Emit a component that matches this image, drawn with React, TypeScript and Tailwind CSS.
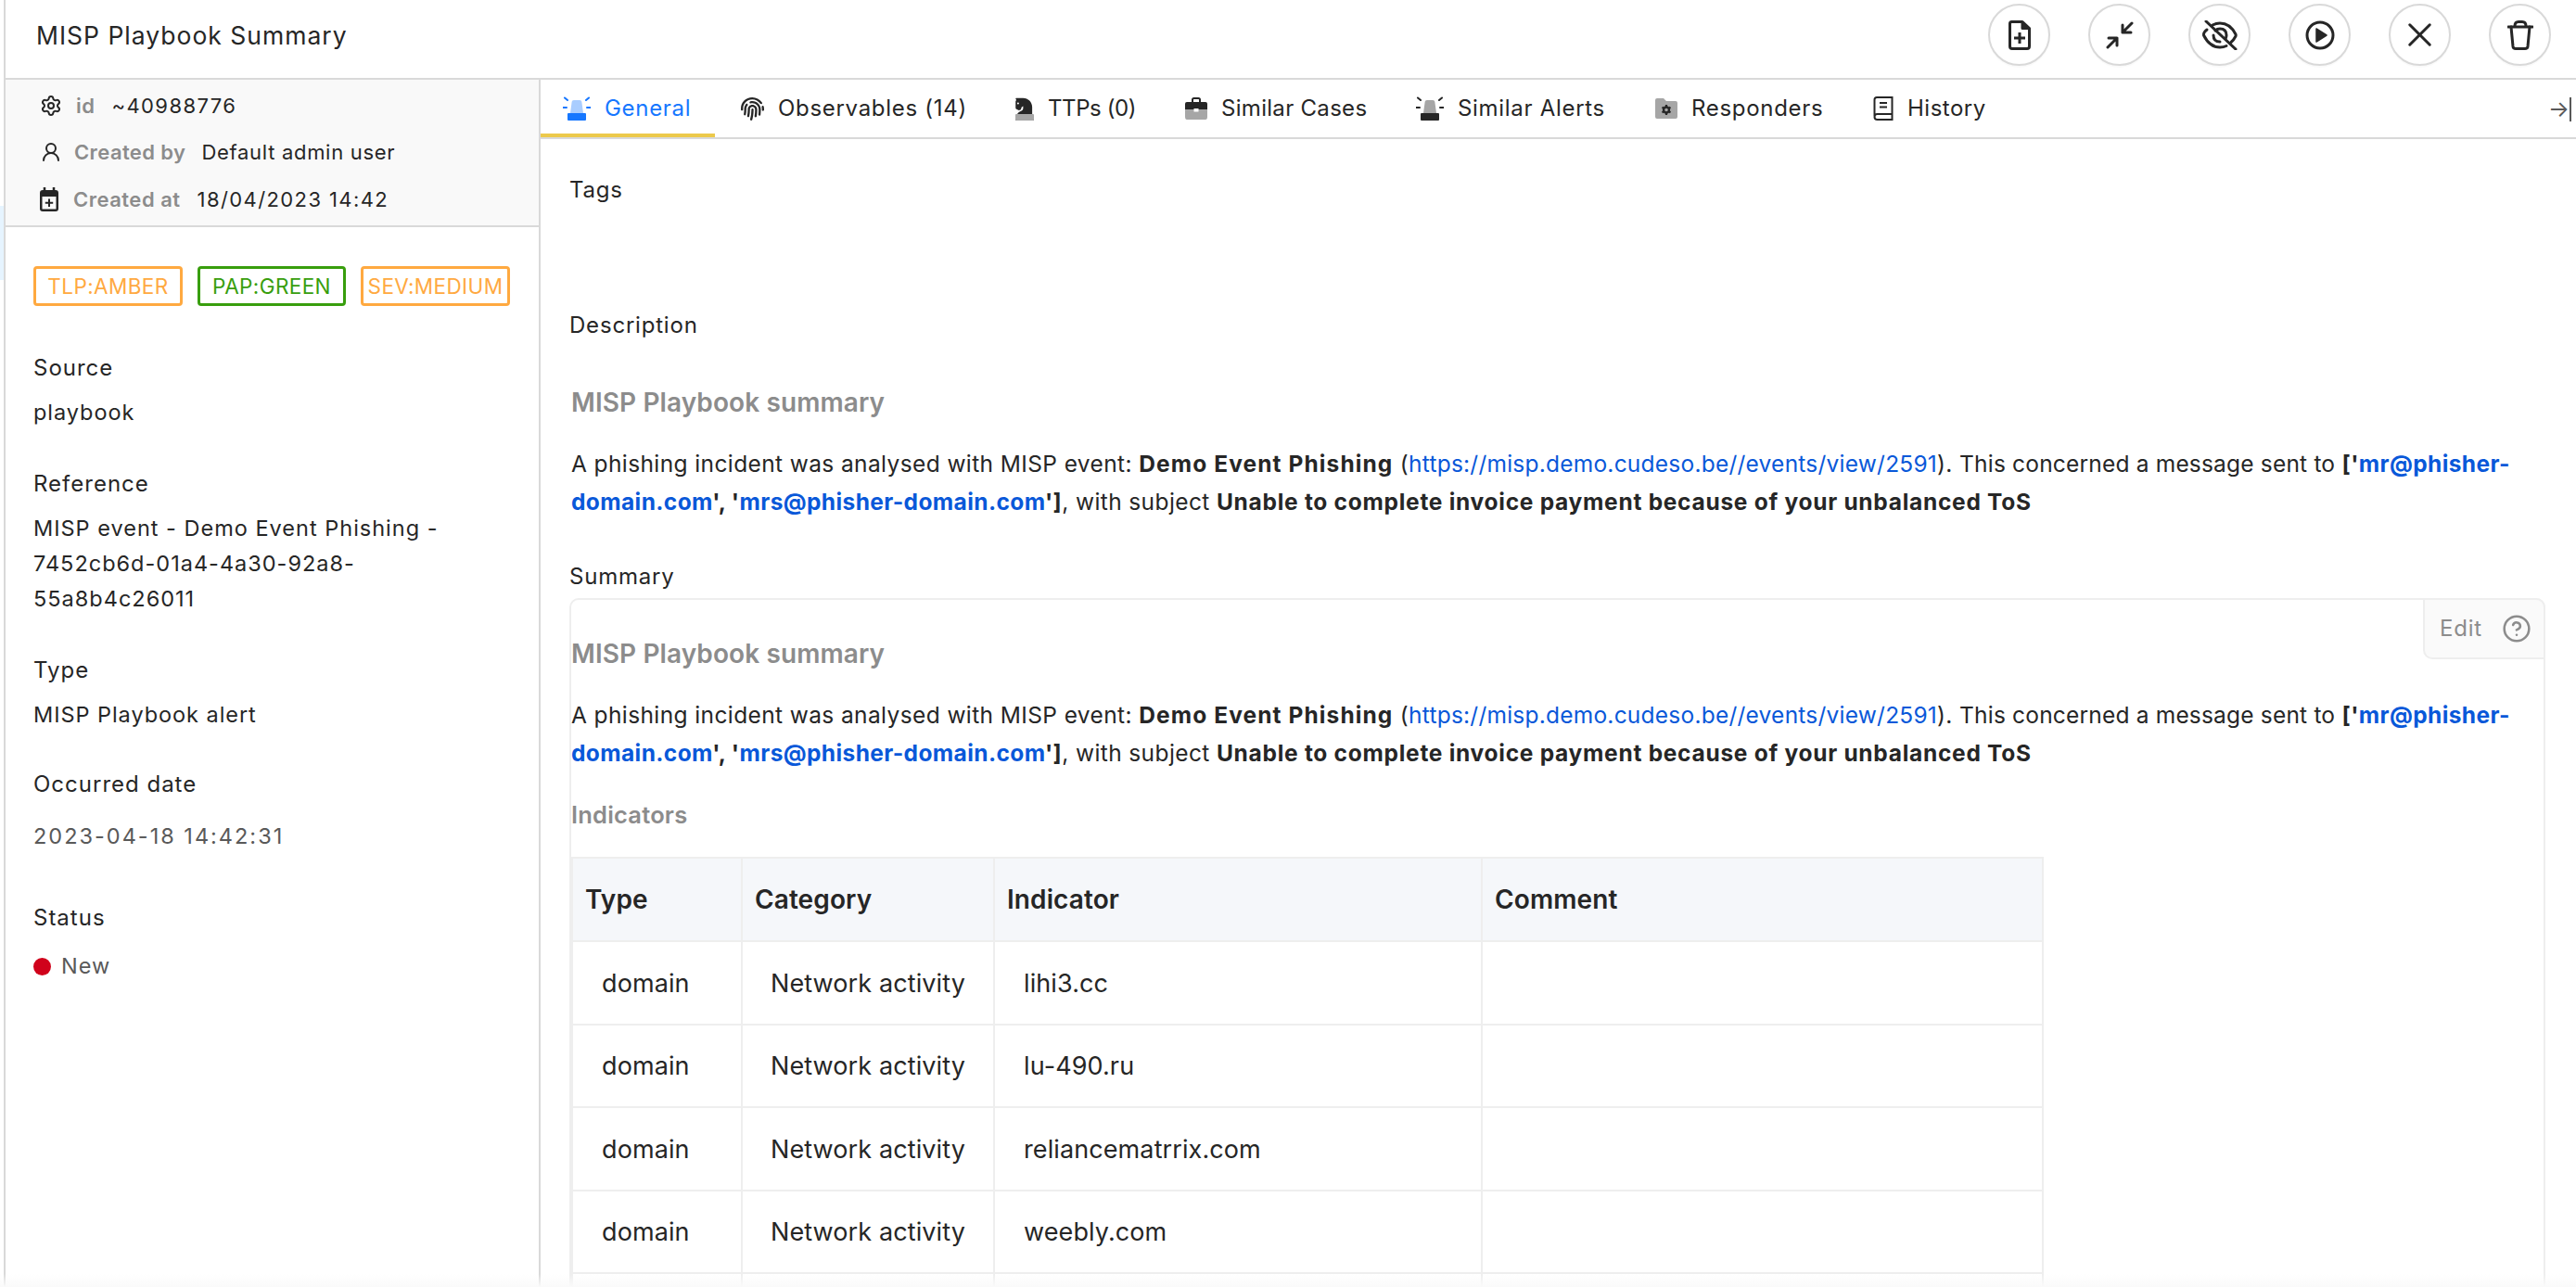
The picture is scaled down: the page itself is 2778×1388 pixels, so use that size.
import { CircleHelp, Settings, UserRound, X } from 'lucide-react';
import { FaChessKnight, FaFingerprint } from 'react-icons/fa';

const tabs = [
  { label: 'Observables (14)', icon: 'print', cls: 'w-[324px] pl-[28px]', text: 'tracking-[0.7px]' },
  { label: 'TTPs (0)', icon: 'knight', cls: 'w-[183px]', text: 'tracking-[-0.4px]' },
  { label: 'Similar Cases', icon: 'case', cls: 'w-[249px]', text: 'tracking-[0.3px]' },
  { label: 'Similar Alerts', icon: 'siren', cls: 'w-[258px]', text: 'tracking-[0.7px]' },
  { label: 'Responders', icon: 'folder', cls: 'w-[235px]', text: 'tracking-[0.7px]' },
  { label: 'History', icon: 'book', cls: 'w-[180px]', text: 'tracking-[0.5px]' },
];

const rows = ['lihi3.cc', 'lu-490.ru', 'reliancematrrix.com', 'weebly.com', ''];

function Siren({ dark }: { dark?: boolean }) {
  const base = dark ? '#262626' : '#1677ff';
  const dome = dark ? '#a6a6a6' : '#a9cdff';
  const ray = dark ? '#262626' : '#1677ff';
  return (
    <svg width="30" height="26" viewBox="0 0 30 26" fill="none">
      <path d="M9.5 7 Q9.5 4 12 4 H18 Q20.5 4 20.5 7 L22 18 H8 Z" fill={dome} />
      <rect x="5" y="18" width="20" height="8" rx="1" fill={base} />
      <path d="M2 1.5 L5 4 M28 1.5 L25 4 M0.5 12 H4 M26 12 H29.5" stroke={ray} strokeWidth="2" strokeLinecap="round" />
    </svg>
  );
}

function TabIcon({ name }: { name: string }) {
  if (name === 'print') return <FaFingerprint size={25} className="text-[#262626]" />;
  if (name === 'knight')
    return (
      <span className="relative flex h-[26px] w-[20px] flex-col items-center overflow-hidden">
        <FaChessKnight size={26} className="text-[#262626]" />
        <span className="absolute bottom-0 left-0 h-[7px] w-[20px] rounded-[1px] bg-[#a6a6a6]" />
      </span>
    );
  if (name === 'case')
    return (
      <svg width="24" height="24" viewBox="0 0 24 24" fill="none">
        <path d="M8 5 V2.5 Q8 1 9.5 1 H14.5 Q16 1 16 2.5 V5" stroke="#262626" strokeWidth="2" />
        <path d="M0 7 Q0 5 2 5 H22 Q24 5 24 7 V13 H0 Z" fill="#262626" />
        <path d="M0 13 H24 V21 Q24 24 22 24 H2 Q0 24 0 21 Z" fill="#a6a6a6" />
        <rect x="9.5" y="12" width="5" height="3.5" fill="#fff" />
      </svg>
    );
  if (name === 'siren') return <Siren dark />;
  if (name === 'folder')
    return (
      <svg width="24" height="24" viewBox="0 0 24 24">
        <path d="M0 3 Q0 1 2 1 H9 L12 4 H22 Q24 4 24 6 V21 Q24 23 22 23 H2 Q0 23 0 21 Z" fill="#a6a6a6" />
        <circle cx="12" cy="13.5" r="3" fill="none" stroke="#262626" strokeWidth="2.4" />
        <path d="M12 8 V10 M12 17 V19 M7.500 10.700 L9 11.700 M15 15.300 L16.500 16.300 M7.500 16.300 L9 15.300 M15 11.700 L16.500 10.700" stroke="#262626" strokeWidth="2.2" />
      </svg>
    );
  return (
    <svg width="22" height="26" viewBox="0 0 22 26" fill="none" stroke="#262626" strokeWidth="2">
      <path d="M1.5 21 V3.5 Q1.5 1 4 1 H20.5 V19 H4.5 Q1.5 19 1.5 22 Q1.5 25 4.5 25 H20.5 V19" />
      <path d="M7 7 H15 M7 11.5 H15" />
    </svg>
  );
}

function RoundButton({ children }: { children: React.ReactNode }) {
  return (
    <div className="flex size-[67px] shrink-0 items-center justify-center rounded-full border-2 border-[#d9d9d9] bg-white text-[#262626] shadow-[0_2px_0_rgba(0,0,0,0.02)]">
      {children}
    </div>
  );
}

function Field({ label, className, children }: { label: string; className: string; children: React.ReactNode }) {
  return (
    <div className={className}>
      <div className="text-[24px] leading-[30px] tracking-[1px] text-[#262626]">{label}</div>
      {children}
    </div>
  );
}

function Report() {
  return (
    <>
      <h2 className="text-[28px] font-semibold leading-[36px] tracking-[0.1px] text-[#8c8c8c]">MISP Playbook summary</h2>
      <p className="mt-[28px] whitespace-nowrap text-[24.5px] leading-[41px] tracking-[0.39px] text-[#262626]">
        A phishing incident was analysed with MISP event: <b className="tracking-[1.1px]">Demo Event Phishing</b> (
        <span className="tracking-[0.23px] text-[#0958d9]">https://misp.demo.cudeso.be//events/view/2591</span>).{' '}
        <span className="tracking-[0.19px]">This concerned a message sent to</span>{' '}
        <b>
          ['<span className="text-[#0958d9]">mr@phisher-</span>
          <br />
          <span className="text-[#0958d9]">domain.com</span>', '<span className="text-[#0958d9]">mrs@phisher-domain.com</span>']
        </b>
        , with subject <b className="tracking-[0.72px]">Unable to complete invoice payment because of your unbalanced ToS</b>
      </p>
    </>
  );
}

export default function App() {
  return (
    <div className="relative flex h-[1388px] w-[2778px] overflow-hidden bg-white text-[#262626] [font-family:Inter,sans-serif]">
      {/* strip of the nav behind the drawer */}
      <div className="w-[4px] shrink-0 bg-white">
        <div className="mt-[222px] h-[80px] bg-[#e6f4ff]" />
      </div>

      <div className="flex min-w-0 flex-1 flex-col border-l-2 border-[#d9d9d9]">
        {/* Title bar */}
        <header className="flex h-[86px] shrink-0 border-b-2 border-[#d9d9d9] pl-[33px]">
          <div className="mt-[19px] text-[26.5px] leading-[38px] tracking-[1px] text-[#262626]">MISP Playbook Summary</div>
          <div className="ml-auto mr-[27px] mt-[4px] flex gap-[41px]">
            <RoundButton>
              <svg width="24" height="32" viewBox="0 0 24 32" fill="none" stroke="currentColor" strokeWidth="3" strokeLinejoin="round">
                <path d="M3.5 1.5 H15 L22.5 8.5 V28 Q22.5 30.5 20 30.5 H4 Q1.5 30.5 1.5 28 V3.5 Q1.5 1.5 3.5 1.5 Z" />
                <path d="M15 1.5 V8.5 H22.5" fill="currentColor" />
                <path d="M12 13 V25 M6 19 H18" />
              </svg>
            </RoundButton>
            <RoundButton>
              <svg width="30" height="30" viewBox="0 0 30 30" fill="none" stroke="currentColor" strokeWidth="3" strokeLinecap="round" strokeLinejoin="round">
                <path d="M28 2 L18 12 M18 4 V12 H27" />
                <path d="M2 28 L12 18 M12 26 V18 H3" />
              </svg>
            </RoundButton>
            <RoundButton>
              <svg width="40" height="32" viewBox="0 0 40 32" fill="none" stroke="currentColor" strokeWidth="3" strokeLinecap="round" strokeLinejoin="round">
                <path d="M6 10 Q2 13 2.500 16 Q9 29 20 29 Q24 29 27 27.500" />
                <path d="M12 5 Q16 3 20 3 Q31 3 37 15 Q37.500 16 37 17 Q35 21 32 23.500" />
                <path d="M15 11 Q17 9 20 9 Q27 9 27 16 Q27 18 26 20 M13 16 Q13 23 20 23" />
                <path d="M5 1 L37 31" />
              </svg>
            </RoundButton>
            <RoundButton>
              <svg width="32" height="32" viewBox="0 0 32 32">
                <circle cx="16" cy="16" r="14" fill="none" stroke="currentColor" strokeWidth="3" />
                <path d="M12 9 L23 16 L12 23 Z" fill="currentColor" stroke="currentColor" strokeLinejoin="round" strokeWidth="1.500" />
              </svg>
            </RoundButton>
            <RoundButton>
              <X size={43} strokeWidth={1.700} />
            </RoundButton>
            <RoundButton>
              <svg width="28" height="32" viewBox="0 0 28 32" fill="none" stroke="currentColor" strokeWidth="3" strokeLinecap="round" strokeLinejoin="round">
                <path d="M1 7 H27" />
                <path d="M8 6 Q8 1.500 12 1.500 H16 Q20 1.500 20 6" />
                <path d="M4 7 L6 28 Q6.300 30.500 9 30.500 H19 Q21.700 30.500 22 28 L24 7" />
              </svg>
            </RoundButton>
          </div>
        </header>

        <div className="flex min-h-0 flex-1">
          {/* Sidebar */}
          <aside className="flex w-[577px] shrink-0 flex-col border-r-2 border-[#d9d9d9]">
            <div className="h-[159px] shrink-0 border-b-2 border-[#d9d9d9] bg-[#f9f9f9] pl-[38px] pt-[15px] text-[22px]">
              <div className="flex h-[26px] items-center">
                <Settings size={24} strokeWidth={2} className="-ml-[1px] text-[#262626]" />
                <span className="ml-[15px] font-semibold tracking-[0.5px] text-[#8c8c8c]">id</span>
                <span className="ml-[18px] tracking-[1.4px]">~40988776</span>
              </div>
              <div className="mt-[24px] flex h-[26px] items-center">
                <UserRound size={24} strokeWidth={2} className="-ml-[1px]" />
                <span className="ml-[13px] font-semibold tracking-[0.4px] text-[#8c8c8c]">Created by</span>
                <span className="ml-[17px] tracking-[0.7px]">Default admin user</span>
              </div>
              <div className="mt-[25px] flex h-[26px] items-center">
                <svg width="20" height="26" viewBox="0 0 20 26" className="-ml-[1px] mr-[1px]">
                  <path d="M3 3 H17 Q20 3 20 6 V23 Q20 26 17 26 H3 Q0 26 0 23 V6 Q0 3 3 3 Z M2.500 10 V23.500 H17.500 V10 Z" fill="#262626" fillRule="evenodd" />
                  <path d="M5 0 V4 M15 0 V4" stroke="#262626" strokeWidth="2.500" />
                  <path d="M10 12.500 V21 M5.800 16.800 H14.200" stroke="#262626" strokeWidth="2" />
                </svg>
                <span className="ml-[15px] font-semibold tracking-[0.5px] text-[#8c8c8c]">Created at</span>
                <span className="ml-[18px] tracking-[1.4px]">18/04/2023 14:42</span>
              </div>
            </div>

            <div className="flex-1 pl-[30px]">
              <div className="mt-[42px] flex gap-[16px] text-[22.5px] tracking-[0.4px]">
                <span className="flex h-[43px] w-[161px] items-center justify-center rounded-[4px] border-[3px] border-[#ffa940] text-[#ffa940]">TLP:AMBER</span>
                <span className="flex h-[43px] w-[160px] items-center justify-center rounded-[4px] border-[3px] border-[#389e0d] text-[#389e0d]">PAP:GREEN</span>
                <span className="flex h-[43px] w-[161px] items-center justify-center rounded-[4px] border-[3px] border-[#ffa940] text-[#ffa940]">SEV:MEDIUM</span>
              </div>
              <Field label="Source" className="mt-[52px]">
                <div className="mt-[18px] text-[23.5px] leading-[30px] tracking-[0.95px]">playbook</div>
              </Field>
              <Field label="Reference" className="mt-[47px]">
                <div className="mt-[14px] whitespace-nowrap text-[23.5px] leading-[38px] tracking-[1px]">
                  MISP event - Demo Event Phishing -<br />
                  7452cb6d-01a4-4a30-92a8-
                  <br />
                  55a8b4c26011
                </div>
              </Field>
              <Field label="Type" className="mt-[43px]">
                <div className="mt-[18px] text-[23.5px] leading-[30px] tracking-[0.95px]">MISP Playbook alert</div>
              </Field>
              <Field label="Occurred date" className="mt-[45px]">
                <div className="mt-[26px] text-[23.5px] leading-[30px] tracking-[2px] text-[#595959]">2023-04-18 14:42:31</div>
              </Field>
              <Field label="Status" className="mt-[58px]">
                <div className="mt-[22px] flex items-center">
                  <span className="size-[19px] rounded-full bg-[#d0021b]" />
                  <span className="ml-[11px] text-[23.5px] leading-[30px] tracking-[0.95px] text-[#595959]">New</span>
                </div>
              </Field>
            </div>
          </aside>

          {/* Main panel */}
          <main className="flex min-w-0 flex-1 flex-col">
            <div className="relative flex h-[64px] shrink-0 border-b-2 border-[#d9d9d9]">
              <div className="flex h-[62px] w-[188px] shrink-0 items-center border-b-[4px] border-[#ecc94b] pl-[24px] pt-[4px] text-[#1677ff]">
                <Siren />
                <span className="ml-[15px] text-[24px] tracking-[0.7px]">General</span>
              </div>
              {tabs.map((t) => (
                <div key={t.label} className={`flex h-[62px] shrink-0 items-center ${t.cls}`}>
                  <TabIcon name={t.icon} />
                  <span className={`ml-[15px] whitespace-nowrap text-[24px] ${t.text}`}>{t.label}</span>
                </div>
              ))}
              <div className="absolute right-[5px] top-[17px] flex items-center text-[#595959]">
                <span className="text-[24px] leading-[30px]">→</span>
                <span className="h-[26px] w-[2px] bg-[#595959]" />
              </div>
            </div>

            <div className="min-h-0 flex-1 overflow-hidden pl-[31px] pr-[33px]">
              <div className="mt-[40px] text-[24px] leading-[30px] tracking-[0.8px]">Tags</div>
              <div className="mt-[116px] text-[24px] leading-[30px] tracking-[0.8px]">Description</div>
              <div className="ml-[2px] mt-[50px]">
                <Report />
              </div>
              <div className="mt-[45px] text-[24px] leading-[30px] tracking-[0.8px]">Summary</div>

              <div className="relative mt-[8px] rounded-[10px] border-2 border-[#eeeeee]">
                <div className="absolute right-[-2px] top-[-2px] flex h-[66px] w-[132px] items-center rounded-bl-[10px] rounded-tr-[10px] border-2 border-[#eeeeee] bg-[#fafafa] pl-[16px] text-[#8c8c8c]">
                  <span className="text-[24px] tracking-[0.8px]">Edit</span>
                  <CircleHelp size={32} strokeWidth={1.900} className="ml-[21px]" />
                </div>
                <div className="pt-[40px]">
                  <Report />
                  <h3 className="mt-[28px] text-[25.5px] font-semibold leading-[36px] tracking-[0.2px] text-[#8c8c8c]">Indicators</h3>
                  <table className="mt-[27px] w-[1588px] table-fixed border-collapse text-[27px] tracking-[0.1px] text-[#262626]">
                    <colgroup>
                      <col className="w-[183px]" />
                      <col className="w-[272px]" />
                      <col className="w-[526px]" />
                      <col />
                    </colgroup>
                    <thead>
                      <tr className="h-[90px] bg-[#f5f7fa] text-left">
                        {['Type', 'Category', 'Indicator', 'Comment'].map((h) => (
                          <th key={h} className="border-2 border-[#eeeeee] px-[13px] text-[28px] font-semibold">{h}</th>
                        ))}
                      </tr>
                    </thead>
                    <tbody>
                      {rows.map((r, i) => (
                        <tr key={i} className="h-[89.500px]">
                          <td className="border-2 border-[#eeeeee] px-[31px] pt-[2px]">{r && 'domain'}</td>
                          <td className="border-2 border-[#eeeeee] px-[30px] pt-[2px]">{r && 'Network activity'}</td>
                          <td className="border-2 border-[#eeeeee] px-[31px] pt-[2px]">{r}</td>
                          <td className="border-2 border-[#eeeeee]" />
                        </tr>
                      ))}
                    </tbody>
                  </table>
                </div>
              </div>
            </div>
          </main>
        </div>
      </div>

      {/* soft fade along the bottom edge */}
      <div className="absolute inset-x-0 bottom-0 h-[14px] bg-gradient-to-b from-transparent to-[#fafafa]" />
    </div>
  );
}
